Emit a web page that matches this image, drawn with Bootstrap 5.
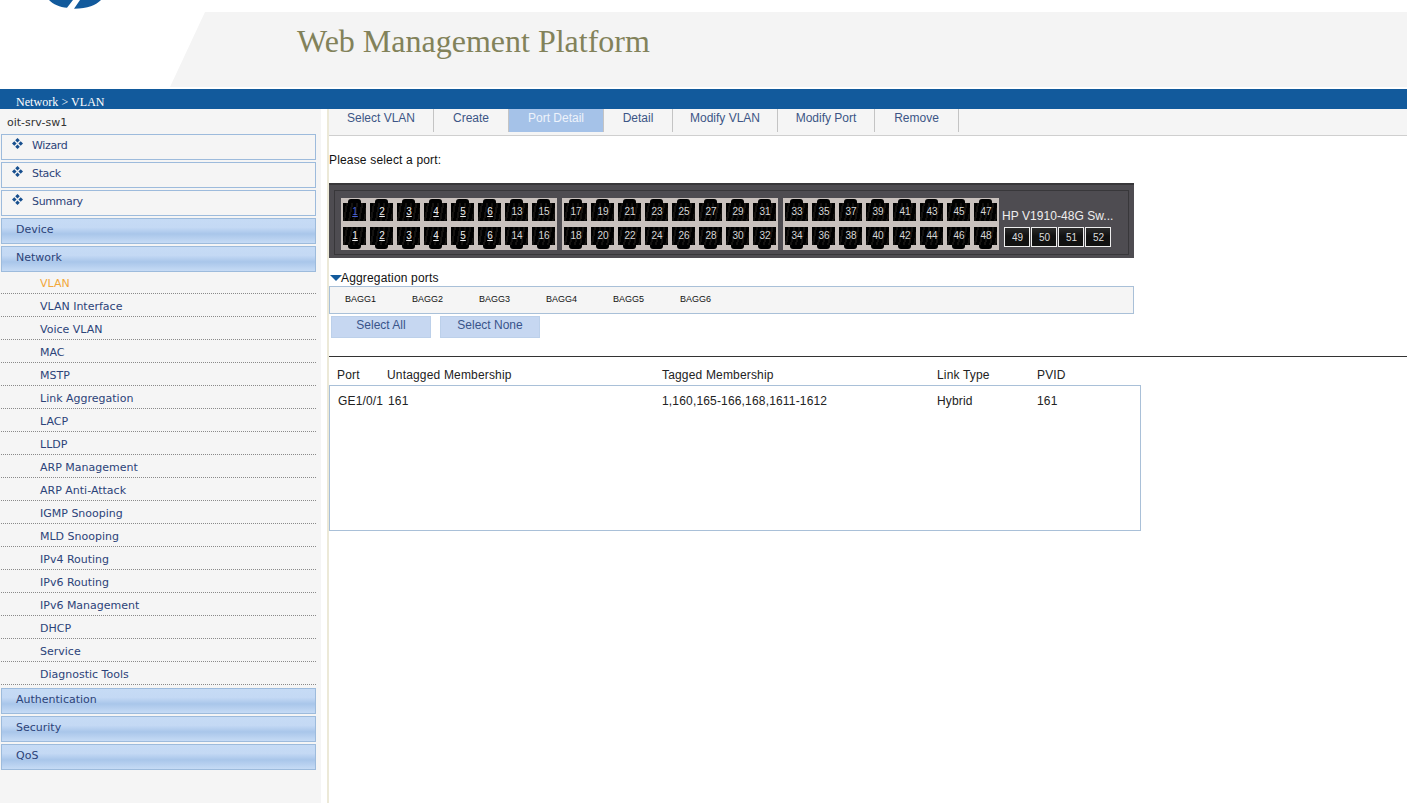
<!DOCTYPE html>
<html lang="en"><head><meta charset="utf-8"><title>Web Management Platform</title>
<link href="https://cdn.jsdelivr.net/npm/bootstrap@5.3.0/dist/css/bootstrap.min.css" rel="stylesheet">
<style>
html,body{height:803px;overflow:hidden}
body{font-family:"Liberation Sans",Arial,sans-serif;font-size:12px;color:#111;background:#fff;line-height:1.2}
.hd{height:89px;position:relative;padding-top:12px}
.hd-logo{position:absolute;left:47px;top:0}
.hd-panel{height:75px;margin-left:170px;padding:9px 0 0 127px;background:#f4f4f4;clip-path:polygon(35px 0,100% 0,100% 100%,0 100%);font:32px "Liberation Serif",serif;color:#82825a;line-height:41px}
.crumb{height:20px;background:#125a9c;color:#fff;font:12px/26px "Liberation Serif",serif;padding-left:16px;letter-spacing:.05px}
.shell{height:694px}
.side{width:321px;background:#f5f5f5;font:11px "DejaVu Sans",sans-serif;color:#2c4379;flex:none}
.host{height:25px;padding:7px 0 0 7px;color:#333;line-height:14px}
.mbox{width:315px;height:26px;margin:0 0 2px 1px;border:1px solid #9dbbdc;display:flex;align-items:center;line-height:22px;padding-bottom:2px}
.mlight{background:#f5f5f5;padding-left:10px;letter-spacing:-.35px}
.mlight svg{margin:-5px 9px 0 0;flex:none}
.mblue{background:linear-gradient(#c6dbf5 0,#c4d9f4 35%,#a9c6ea 62%,#c6dbf5 100%);padding-left:14px}
.sub{width:315px;margin-left:1px;height:23px;border-bottom:1px dotted #8a8a8a;padding:5px 0 0 39px;line-height:15px}
.sub-on{color:#f2a83a}
.sublist{padding-bottom:3px;margin-top:-3px}
.rail{width:6px;flex:none}
.beige{width:2px;flex:none;background:#ece9d8}
.pane{flex:1;min-width:0;letter-spacing:.17px}
.tabs{height:27px;background:#f5f5f5;border-bottom:1px solid #cfcfcf;letter-spacing:0}
.tabi{height:23px;border-right:1px solid #c4c4c4;color:#3c5586;text-align:center;line-height:18px;flex:none}
.tabi-on{background:#a5c2e8;color:#eef3fb}
.prompt{padding-top:17px;height:47px}
.sw{width:805px;height:75px;background:#4e4c51;padding:6px 5px;border-top:2px solid #38373a;letter-spacing:0}
.sw-in{height:65px;border:1px solid #38373a;padding:7px 0 0 6px;margin-top:-1px}
.pgrp{background:#c9c1bd;padding:5px 2px 0;height:52px;margin-right:5px;flex:none}
.pgrp-end{margin-right:3px}
.prow{gap:4px;height:24px}
.pt{width:23px;height:18px;background:repeating-linear-gradient(100deg,#000 0 3px,#141210 3px 5px);color:#d8d8d8;text-align:center;font-size:10px;line-height:18px;position:relative;flex:none;padding-left:1px}
.pt::before{content:"";position:absolute;left:5px;width:13px;height:4px;background:#000;top:-4px;border-radius:3px 3px 0 0}
.pt-low::before{top:18px;border-radius:0 0 3px 3px}
.pt b{font-weight:400;text-decoration:underline;color:#eee}
.pt-sel b{color:#4a63d8}
.swname{color:#eee;font-size:12px;line-height:14px;padding:11px 0 4px;white-space:nowrap;width:124px;letter-spacing:.05px}
.sfps{gap:1px;padding-left:2px}
.sfp{width:26px;height:20px;background:linear-gradient(#2b2b2b,#111 45%);border:1px solid #eee;color:#ddd;font-size:10px;text-align:center;line-height:19px;padding-left:1px}
.agg-t{padding-top:14px;line-height:13px;height:28px}
.tri{width:0;height:0;border-left:6px solid transparent;border-right:6px solid transparent;border-top:6px solid #125a9c;margin:3px 0 0 1px}
.agg-t .tri{margin-right:-1px}
.baggs{width:805px;height:28px;background:#f5f5f5;border:1px solid #a9c0d8;font-size:9px;line-height:24px;padding-left:15px;letter-spacing:0}
.baggs span{width:67px;flex:none}
.btnrow{gap:9px;padding:2px 0 0 2px;height:42px;letter-spacing:0}
.sbtn{width:100px;height:22px;background:#c6d7f1;border:1px solid #bcd0ea;color:#39548a;text-align:center;line-height:16px}
.rule{height:0;border-top:1px solid #333}
.thead{padding-top:11px;height:28px;color:#222}
.c1{width:58px;padding-left:8px;flex:none;white-space:nowrap}.c2{width:275px;flex:none}.c3{width:275px;flex:none}.c4{width:100px;flex:none}
.tbox{width:812px;height:146px;border:1px solid #a9c0d8;padding-top:8px;color:#222}
.tbox .c2{width:274px}
</style></head>
<body>
<header class="hd">
<svg class="hd-logo" width="56" height="9" viewBox="0 0 56 9" aria-hidden="true"><path d="M2 0H26L20 7.800C13 7.200 6 4.500 2 0ZM33 0H54C49 5 41 8.700 27 8.700Z" fill="#125a9c"/></svg>
<div class="hd-panel">Web Management Platform</div>
</header>
<div class="crumb">Network &gt; VLAN</div>
<div class="shell d-flex">
<nav class="side">
<div class="host">oit-srv-sw1</div>
<div class="mbox mlight"><svg width="11" height="11" viewBox="0 0 12 12" aria-hidden="true"><path d="M6 0 8.500 2.500 6 5 3.500 2.500ZM2.500 3.500 5 6 2.500 8.500 0 6ZM9.500 3.500 12 6 9.500 8.500 7 6ZM6 7 8.500 9.500 6 12 3.500 9.500Z" fill="#174f8e"/></svg>Wizard</div>
<div class="mbox mlight"><svg width="11" height="11" viewBox="0 0 12 12" aria-hidden="true"><path d="M6 0 8.500 2.500 6 5 3.500 2.500ZM2.500 3.500 5 6 2.500 8.500 0 6ZM9.500 3.500 12 6 9.500 8.500 7 6ZM6 7 8.500 9.500 6 12 3.500 9.500Z" fill="#174f8e"/></svg>Stack</div>
<div class="mbox mlight"><svg width="11" height="11" viewBox="0 0 12 12" aria-hidden="true"><path d="M6 0 8.500 2.500 6 5 3.500 2.500ZM2.500 3.500 5 6 2.500 8.500 0 6ZM9.500 3.500 12 6 9.500 8.500 7 6ZM6 7 8.500 9.500 6 12 3.500 9.500Z" fill="#174f8e"/></svg>Summary</div>
<div class="mbox mblue">Device</div>
<div class="mbox mblue">Network</div>
<div class="sublist">
<div class="sub sub-on">VLAN</div><div class="sub">VLAN Interface</div><div class="sub">Voice VLAN</div><div class="sub">MAC</div><div class="sub">MSTP</div><div class="sub">Link Aggregation</div><div class="sub">LACP</div><div class="sub">LLDP</div><div class="sub">ARP Management</div><div class="sub">ARP Anti-Attack</div><div class="sub">IGMP Snooping</div><div class="sub">MLD Snooping</div><div class="sub">IPv4 Routing</div><div class="sub">IPv6 Routing</div><div class="sub">IPv6 Management</div><div class="sub">DHCP</div><div class="sub">Service</div><div class="sub">Diagnostic Tools</div>
</div>
<div class="mbox mblue">Authentication</div>
<div class="mbox mblue">Security</div>
<div class="mbox mblue">QoS</div>
</nav>
<div class="rail"></div><div class="beige"></div>
<main class="pane">
<div class="tabs d-flex">
<div class="tabi" style="width:105px">Select VLAN</div><div class="tabi" style="width:75px">Create</div><div class="tabi tabi-on" style="width:95px">Port Detail</div><div class="tabi" style="width:69px">Detail</div><div class="tabi" style="width:105px">Modify VLAN</div><div class="tabi" style="width:97px">Modify Port</div><div class="tabi" style="width:84px">Remove</div>
</div>
<div class="prompt">Please select a port:</div>
<div class="sw"><div class="sw-in d-flex">
<div class="pgrp">
<div class="prow d-flex"><div class="pt pt-sel"><b>1</b></div><div class="pt"><b>2</b></div><div class="pt"><b>3</b></div><div class="pt"><b>4</b></div><div class="pt"><b>5</b></div><div class="pt"><b>6</b></div><div class="pt">13</div><div class="pt">15</div></div>
<div class="prow d-flex"><div class="pt pt-low"><b>1</b></div><div class="pt pt-low"><b>2</b></div><div class="pt pt-low"><b>3</b></div><div class="pt pt-low"><b>4</b></div><div class="pt pt-low"><b>5</b></div><div class="pt pt-low"><b>6</b></div><div class="pt pt-low">14</div><div class="pt pt-low">16</div></div>
</div>
<div class="pgrp">
<div class="prow d-flex"><div class="pt">17</div><div class="pt">19</div><div class="pt">21</div><div class="pt">23</div><div class="pt">25</div><div class="pt">27</div><div class="pt">29</div><div class="pt">31</div></div>
<div class="prow d-flex"><div class="pt pt-low">18</div><div class="pt pt-low">20</div><div class="pt pt-low">22</div><div class="pt pt-low">24</div><div class="pt pt-low">26</div><div class="pt pt-low">28</div><div class="pt pt-low">30</div><div class="pt pt-low">32</div></div>
</div>
<div class="pgrp pgrp-end">
<div class="prow d-flex"><div class="pt">33</div><div class="pt">35</div><div class="pt">37</div><div class="pt">39</div><div class="pt">41</div><div class="pt">43</div><div class="pt">45</div><div class="pt">47</div></div>
<div class="prow d-flex"><div class="pt pt-low">34</div><div class="pt pt-low">36</div><div class="pt pt-low">38</div><div class="pt pt-low">40</div><div class="pt pt-low">42</div><div class="pt pt-low">44</div><div class="pt pt-low">46</div><div class="pt pt-low">48</div></div>
</div>
<div>
<div class="swname">HP V1910-48G Sw...</div>
<div class="sfps d-flex"><div class="sfp">49</div><div class="sfp">50</div><div class="sfp">51</div><div class="sfp">52</div></div>
</div>
</div></div>
<div class="agg-t d-flex"><div class="tri"></div><div>Aggregation ports</div></div>
<div class="baggs d-flex"><span>BAGG1</span><span>BAGG2</span><span>BAGG3</span><span>BAGG4</span><span>BAGG5</span><span>BAGG6</span></div>
<div class="btnrow d-flex"><div class="sbtn">Select All</div><div class="sbtn">Select None</div></div>
<div class="rule"></div>
<div class="thead d-flex"><div class="c1">Port</div><div class="c2">Untagged Membership</div><div class="c3">Tagged Membership</div><div class="c4">Link Type</div><div>PVID</div></div>
<div class="tbox d-flex"><div class="c1">GE1/0/1</div><div class="c2">161</div><div class="c3">1,160,165-166,168,1611-1612</div><div class="c4">Hybrid</div><div>161</div></div>
</main>
</div>
<script src="https://cdn.jsdelivr.net/npm/bootstrap@5.3.0/dist/js/bootstrap.bundle.min.js"></script>
</body></html>
